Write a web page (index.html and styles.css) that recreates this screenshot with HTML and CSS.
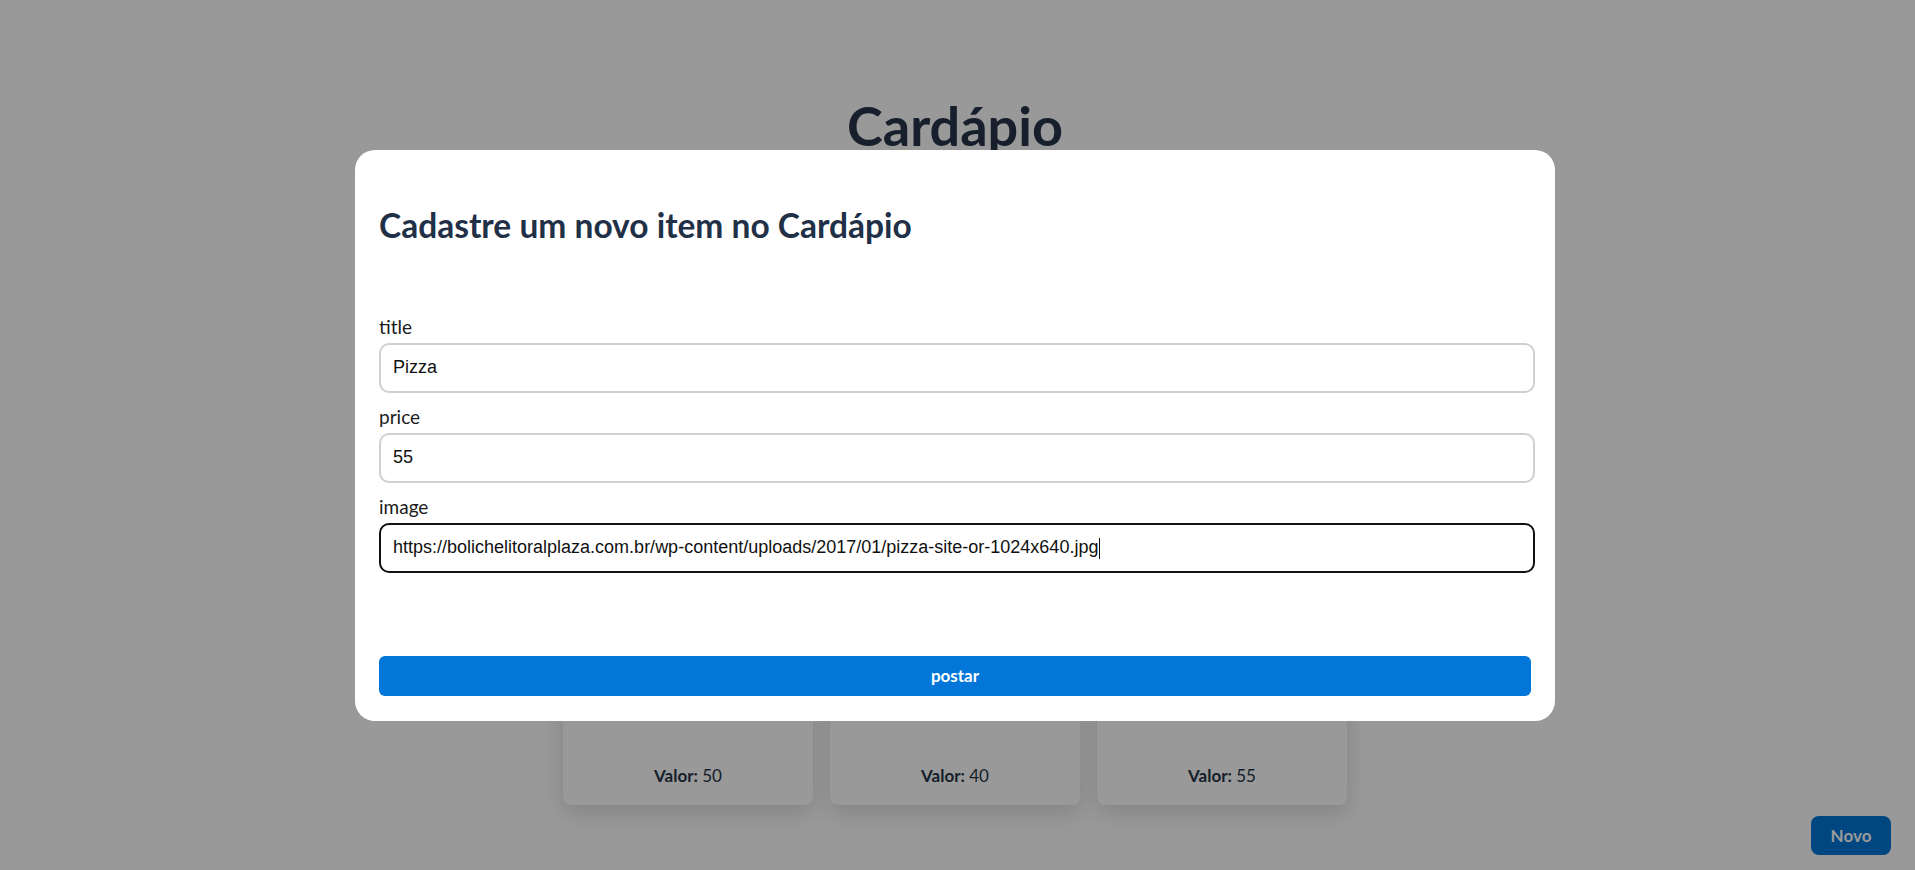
FILE: index.html
```html
<!DOCTYPE html>
<html lang="pt-BR">
<head>
<meta charset="utf-8">
<title>Cardápio</title>
<link rel="stylesheet" href="styles.css">
</head>
<body>
<main class="page">
  <h1 class="page-title">Cardápio</h1>
  <section class="card-grid">
    <article class="card">
      <div class="card-image"></div>
      <h2 class="card-title">Hamburguer</h2>
      <p class="card-price"><b>Valor:</b> 50</p>
    </article>
    <article class="card">
      <div class="card-image"></div>
      <h2 class="card-title">Batata</h2>
      <p class="card-price"><b>Valor:</b> 40</p>
    </article>
    <article class="card">
      <div class="card-image"></div>
      <h2 class="card-title">Pizza</h2>
      <p class="card-price"><b>Valor:</b> 55</p>
    </article>
  </section>
</main>
<button class="new-btn" type="button">Novo</button>
<div class="overlay">
  <div class="modal">
    <h2 class="modal-title">Cadastre um novo item no Cardápio</h2>
    <form class="form">
      <div class="field">
        <label class="field-label" for="f-title">title</label>
        <input class="field-input" id="f-title" type="text" value="Pizza">
      </div>
      <div class="field">
        <label class="field-label" for="f-price">price</label>
        <input class="field-input" id="f-price" type="text" value="55">
      </div>
      <div class="field">
        <label class="field-label" for="f-image">image</label>
        <div class="input-wrap">
          <input class="field-input is-focused" id="f-image" type="text" value="https://bolichelitoralplaza.com.br/wp-content/uploads/2017/01/pizza-site-or-1024x640.jpg">
        </div>
      </div>
      <button class="submit-btn" type="button">postar</button>
    </form>
  </div>
</div>
</body>
</html>
```

FILE: styles.css
```css
* { box-sizing: border-box; }

html, body {
  margin: 0;
  height: 100%;
}

body {
  font-family: "Lato", "Noto Sans", sans-serif;
  background: #ffffff;
  color: #213349;
  overflow: hidden;
}

.page {
  display: flex;
  flex-direction: column;
  align-items: center;
  padding: 95px 5px 0 0;
}

.page-title {
  margin: 0;
  font-size: 54px;
  line-height: 62px;
  font-weight: 700;
  color: #263548;
}

.card-grid {
  display: flex;
  gap: 17px;
  margin-top: 80px;
}

.card {
  width: 250px;
  height: 568px;
  background: #ffffff;
  border-radius: 8px;
  box-shadow: 0 8px 22px rgba(0, 0, 0, 0.14);
  display: flex;
  flex-direction: column;
  align-items: center;
  padding: 16px 16px 18px;
}

.card-image {
  width: 100%;
  flex: 1;
  background: #e8e8e8;
  border-radius: 6px;
}

.card-title {
  margin: 16px 0 0;
  font-size: 20px;
  line-height: 26px;
}

.card-price {
  margin: 52px 0 0;
  font-size: 17px;
  line-height: 22px;
  color: #263548;
}

.card-price b { font-weight: 700; }

.new-btn {
  position: fixed;
  right: 24px;
  bottom: 15px;
  width: 80px;
  height: 39px;
  border: none;
  border-radius: 8px;
  background: #0077d9;
  color: #ffffff;
  font-family: "Lato", "Noto Sans", sans-serif;
  font-size: 17px;
  font-weight: 700;
}

.overlay {
  position: fixed;
  inset: 0;
  background: rgba(0, 0, 0, 0.4);
  display: flex;
  align-items: center;
  justify-content: center;
  padding-right: 5px;
}

.modal {
  width: 1200px;
  background: #ffffff;
  border-radius: 20px;
  padding: 24px 24px 25px;
}

.modal-title {
  margin: 31px 0 71px;
  font-size: 33.5px;
  line-height: 40px;
  font-weight: 700;
  color: #1f3047;
}

.form {
  display: flex;
  flex-direction: column;
}

.field {
  display: flex;
  flex-direction: column;
  gap: 5px;
  margin-bottom: 13px;
}

.field-label {
  font-size: 19px;
  line-height: 22px;
  color: #1b1b1b;
}

.input-wrap {
  position: relative;
}

.input-wrap::after {
  content: "";
  position: absolute;
  left: 720px;
  top: 15px;
  width: 1px;
  height: 21px;
  background: #111111;
}

.field-input {
  width: calc(100% + 4px);
  height: 50px;
  border: 2px solid #d0d0d0;
  border-radius: 10px;
  padding: 0 12px;
  font-family: "Liberation Sans", Arial, sans-serif;
  font-size: 18px;
  color: #111111;
  background: #ffffff;
  outline: none;
}

.field-input.is-focused {
  border-color: #111111;
}

.submit-btn {
  margin-top: 70px;
  height: 40px;
  width: 100%;
  border: none;
  border-radius: 6px;
  background: #0276d9;
  color: #ffffff;
  font-family: "Lato", "Noto Sans", sans-serif;
  font-size: 17px;
  font-weight: 700;
}
```
